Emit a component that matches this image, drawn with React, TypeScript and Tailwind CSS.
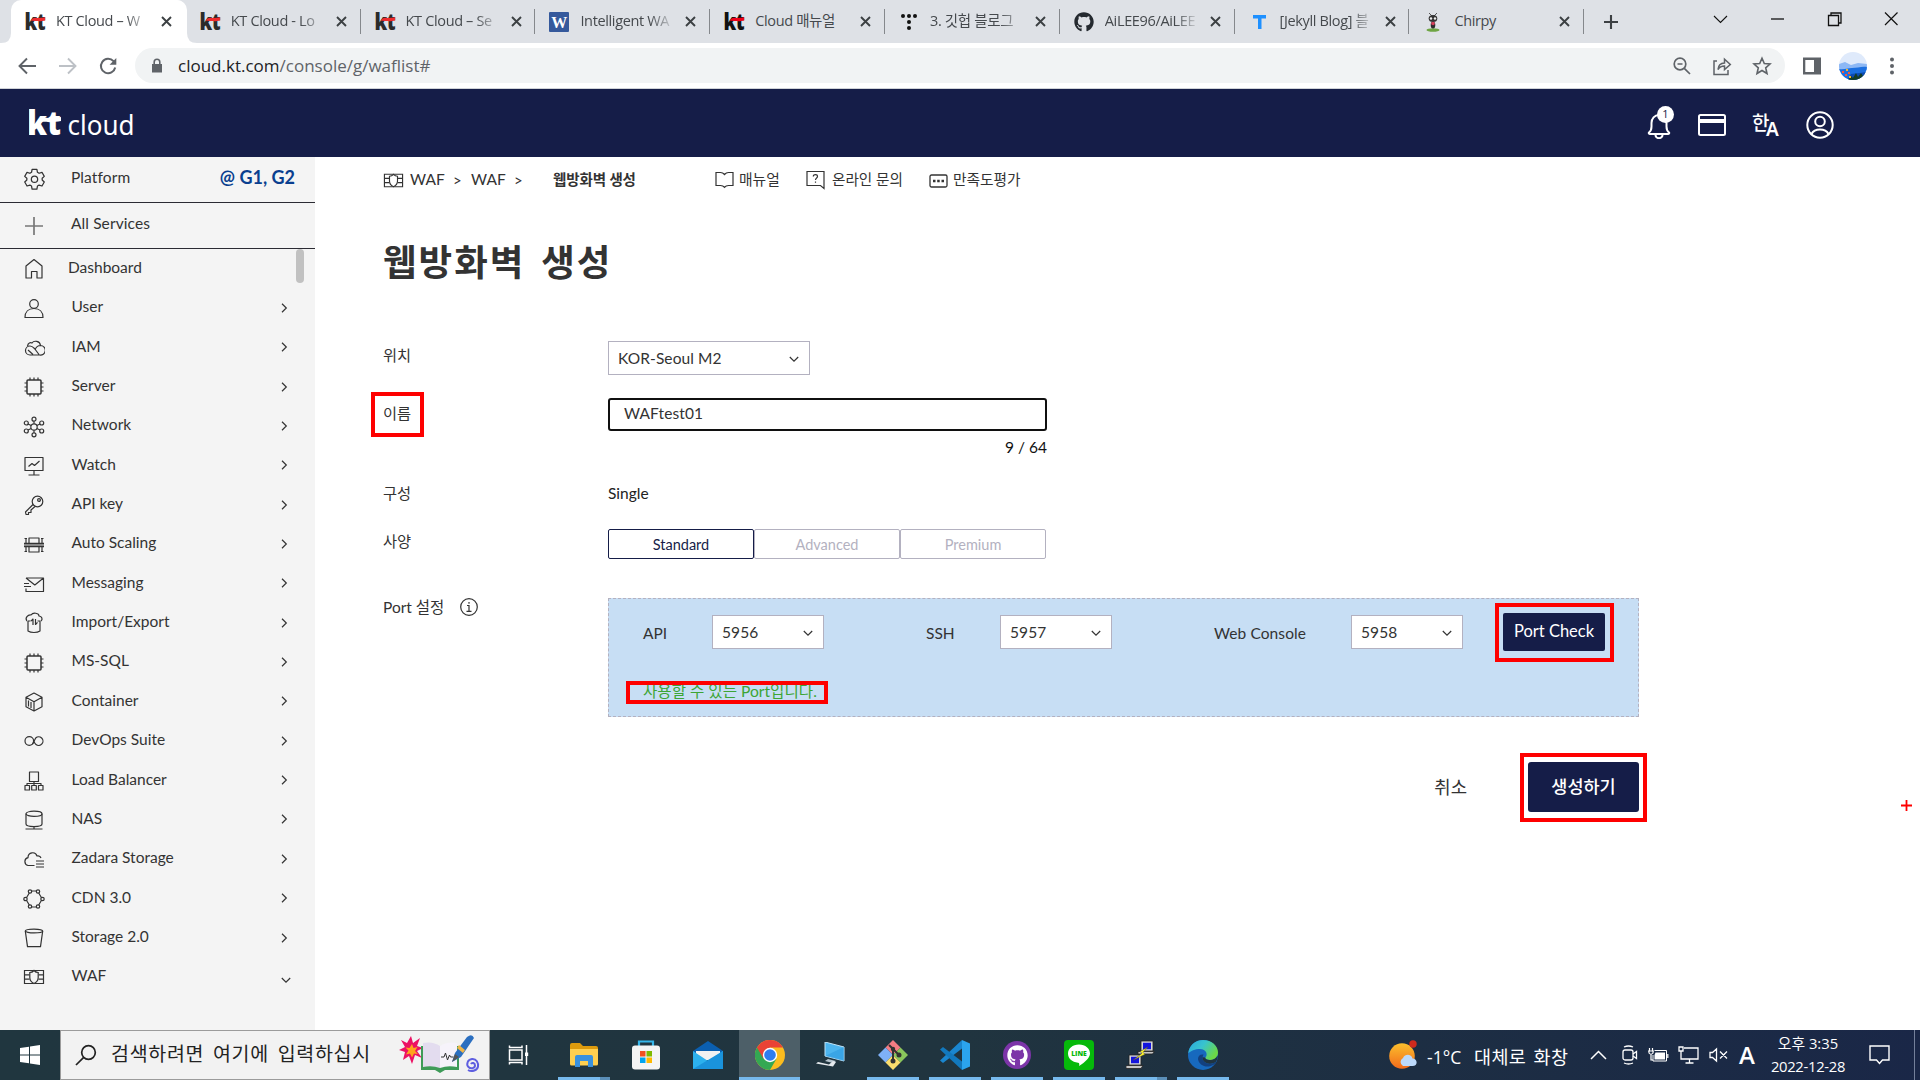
import React from "react";
import { FaGithub } from "react-icons/fa";

const UI = "font-['Open_Sans','Noto_Sans_CJK_KR',sans-serif]";

/* ---------- shared drawings ---------- */

function KtLogo({ size, ink, accent }: { size: number; ink: string; accent: string }) {
  return (
    <svg width={size} height={size} viewBox="0 0 20 20" className="shrink-0 overflow-visible">
      <text x="-0.6" y="17.6" fontSize="22" fontWeight="800" fill={ink} textLength="21" lengthAdjust="spacingAndGlyphs" fontFamily="Open Sans, sans-serif">kt</text>
      <path d="M5.8 8.8C8 5 10 5.6 12.5 5.9c3 .4 5-.1 7.700-.7v3.200c-3 .7-5 1-8 .7-2.400-.2-4-.6-6.400-.3Z" fill={accent} />
    </svg>
  );
}

function Chevron({ down = false, size = 10 }: { down?: boolean; size?: number }) {
  return (
    <svg width={size} height={size} viewBox="0 0 10 10" fill="none" stroke="#333" strokeWidth="1.200">
      {down ? <path d="M.8 3L5 7.200 9.200 3" /> : <path d="M3 .8L7.300 5 3 9.200" />}
    </svg>
  );
}

function WafGlyph({ w = 22, bg = "#f4f4f4" }: { w?: number; bg?: string }) {
  return (
    <svg width={w} height={w} viewBox="0 0 22 22" fill="none" stroke="#333" strokeWidth="1.200" className="shrink-0">
      <path d="M1.500 4.500h19v13h-19zM1.500 8.800h5M1.500 13.200h5M15.500 8.800h5M15.500 13.200h5" />
      <path d="M6.800 6.500c1.800 0 3-.6 4.200-2 1.200 1.400 2.400 2 4.200 2v5c0 2.800-1.700 4.800-4.200 6-2.500-1.200-4.200-3.200-4.200-6z" fill={bg} />
    </svg>
  );
}

/* ---------- browser ---------- */

const favicons: Record<string, React.ReactNode> = {
  kt: <KtLogo size={20} ink="#2b2b2b" accent="#ef2b2d" />,
  kt2: <KtLogo size={20} ink="#111" accent="#ef0018" />,
  w: (
    <svg width="20" height="20" viewBox="0 0 20 20">
      <rect width="20" height="20" rx="1" fill="#35599c" />
      <text x="10" y="15.500" textAnchor="middle" fontSize="16" fontWeight="700" fill="#fff" fontFamily="Liberation Serif, serif">W</text>
    </svg>
  ),
  dots: (
    <svg width="20" height="20" viewBox="0 0 20 20" fill="#111">
      <circle cx="4" cy="4" r="2" /><circle cx="10" cy="4" r="2" /><circle cx="16" cy="4" r="2" />
      <circle cx="10" cy="10" r="2" /><circle cx="10" cy="16" r="2" />
    </svg>
  ),
  gh: <FaGithub size={20} color="#24292f" />,
  t: (
    <svg width="20" height="20" viewBox="0 0 20 20">
      <path d="M4 3h13v3.500h-4.500V17H9V6.500H4z" fill="#1e90ff" />
    </svg>
  ),
  ant: (
    <svg width="20" height="20" viewBox="0 0 20 20">
      <path d="M6 1l3 3M14 1l-3 3" stroke="#555" strokeWidth="1" />
      <ellipse cx="10" cy="18" rx="6.500" ry="1.800" fill="#6fa544" />
      <ellipse cx="10" cy="6.500" rx="4.300" ry="3.500" fill="#333" />
      <circle cx="8" cy="6.500" r="1.200" fill="#eee" /><circle cx="12" cy="6.500" r="1.200" fill="#eee" />
      <ellipse cx="10" cy="13" rx="2.300" ry="3.500" fill="#2c2c2c" />
      <circle cx="10" cy="11.500" r="1.800" fill="#d8405c" />
    </svg>
  ),
};

const tabs = [
  ["kt", "KT Cloud – W"],
  ["kt", "KT Cloud - Lo"],
  ["kt", "KT Cloud – Se"],
  ["w", "Intelligent WA"],
  ["kt2", "Cloud 매뉴얼"],
  ["dots", "3. 깃헙 블로그"],
  ["gh", "AiLEE96/AiLEE"],
  ["t", "[Jekyll Blog] 블"],
  ["ant", "Chirpy"],
];

function TabStrip() {
  return (
    <div className={`flex h-[43px] bg-[#dee1e6] pl-[11px] text-[14.5px] tracking-[-0.35px] text-[#45494d] ${UI}`}>
      {tabs.map(([icon, title], i) => (
        <div key={i} className={`relative flex h-[43px] w-[174.800px] shrink-0 items-center pl-[14px] ${i === 0 ? "rounded-t-[10px] bg-white" : ""}`}>
          {i === 0 && (
            <svg width="196" height="10" viewBox="0 0 196 10" className="absolute bottom-0 left-[-10px]" fill="#fff">
              <path d="M0 10Q10 10 10 0V10zM196 10Q186 10 186 0V10zM184 0h2v10h-2z" />
            </svg>
          )}
          {i === 0 && <div className="absolute left-[165px] top-0 h-[43px] w-[11px] rounded-tr-[10px] bg-white" />}
          <div className="flex w-[20px] shrink-0 justify-center">{favicons[icon]}</div>
          <div className={`ml-[11px] w-[97px] shrink-0 overflow-hidden whitespace-nowrap pb-[1px] ${title === "Chirpy" || title === "Cloud 매뉴얼" ? "" : "[mask-image:linear-gradient(to_right,black_72%,transparent_98%)]"}`}>{title}</div>
          <svg width="11" height="11" viewBox="0 0 11 11" className="relative ml-[8px] shrink-0" stroke="#3c4043" strokeWidth="1.900">
            <path d="M1 1l9 9M10 1L1 10" />
          </svg>
          {i > 0 && <div className="absolute right-0 top-[9px] h-[25px] w-px bg-[#85888c]" />}
        </div>
      ))}
      <div className="flex w-[53px] items-center justify-center">
        <svg width="16" height="16" viewBox="0 0 16 16" stroke="#3c4043" strokeWidth="2.100"><path d="M8 1v14M1 8h14" /></svg>
      </div>
      <div className="ml-auto flex h-[37px] items-center text-black">
        <svg width="57" height="20" viewBox="0 0 57 20" fill="none" stroke="#111" strokeWidth="1.100"><path d="M22 7l6.500 6.500L35 7" /></svg>
        <svg width="57" height="20" viewBox="0 0 57 20" stroke="#111" strokeWidth="1.300"><path d="M22 10h13" /></svg>
        <svg width="57" height="20" viewBox="0 0 57 20" fill="none" stroke="#111" strokeWidth="1.300"><path d="M22.500 6.500h10v10h-10zM25 6.500V4h10v10h-2.500" /></svg>
        <svg width="57" height="20" viewBox="0 0 57 20" stroke="#111" strokeWidth="1.200"><path d="M22 3.500l12.500 12.500M34.500 3.500L22 16" /></svg>
      </div>
    </div>
  );
}

function Toolbar() {
  return (
    <div className={`flex h-[46px] items-center border-b border-[#d0d3d8] bg-white pl-[17px] ${UI}`}>
      <svg width="20" height="20" viewBox="0 0 20 20" fill="none" stroke="#5f6368" strokeWidth="1.900"><path d="M19 10H3M10 2.500L2.500 10l7.500 7.500" /></svg>
      <svg width="20" height="20" viewBox="0 0 20 20" fill="none" stroke="#bdc1c6" strokeWidth="1.900" className="ml-[21px]"><path d="M1 10h16M10 2.500l7.500 7.500-7.500 7.500" /></svg>
      <svg width="20" height="20" viewBox="0 0 20 20" fill="none" stroke="#5f6368" strokeWidth="2" className="ml-[20px]">
        <path d="M17.200 11.500a7.200 7.200 0 1 1-1.700-6.300L17 6.700" /><path d="M18.300 2v6.700h-6.700z" fill="#5f6368" stroke="none" />
      </svg>
      <div className="ml-[17px] flex h-[35px] w-[1650px] items-center rounded-full bg-[#f1f3f4] pl-[16px]">
        <svg width="12" height="15" viewBox="0 0 12 15"><path d="M1 6h10v8.500H1z" fill="#5f6368" /><path d="M3.200 6V4a2.800 2.800 0 0 1 5.600 0v2" fill="none" stroke="#5f6368" strokeWidth="1.600" /></svg>
        <span className="ml-[15px] whitespace-nowrap text-[17px] text-[#202124]">cloud.kt.com<span className="text-[#5f6368]">/console/g/waflist#</span></span>
        <svg width="20" height="20" viewBox="0 0 20 20" fill="none" stroke="#5f6368" strokeWidth="1.700" className="ml-auto"><circle cx="8" cy="8" r="5.800" /><path d="M12.300 12.300l5.700 5.700M5.500 8h5" /></svg>
        <svg width="20" height="20" viewBox="0 0 20 20" fill="none" stroke="#5f6368" strokeWidth="1.500" className="ml-[20px]"><path d="M5 5H2v13.500h14V14M6 13.500c.3-4.500 3-6.300 6.500-6.500V3.300L18.300 8.500l-5.800 5v-3.400c-3 0-5 1-6.500 3.400z" /></svg>
        <svg width="20" height="20" viewBox="0 0 20 20" fill="none" stroke="#5f6368" strokeWidth="1.600" className="ml-[20px] mr-[13px]"><path d="M10 2.200l2.300 5.300 5.700.5-4.300 3.800 1.300 5.700-5-3-5 3 1.300-5.700L2 8l5.700-.5z" /></svg>
      </div>
      <svg width="18" height="18" viewBox="0 0 18 18" className="ml-[18px]"><path d="M0 .5h18v17H0z" fill="#5f6368" /><path d="M2.300 3h8.700v12H2.300z" fill="#fff" /></svg>
      <svg width="28" height="28" viewBox="0 0 28 28" className="ml-[18px]">
        <clipPath id="av"><circle cx="14" cy="14" r="14" /></clipPath>
        <g clipPath="url(#av)">
          <path d="M0 0h28v28H0z" fill="#dfeafb" /><path d="M0 12l6-2 6 3 7-2 9 1v6H0z" fill="#8db8f5" />
          <path d="M0 17c5 1 8-1 13-1s10-2 15-1v15H0z" fill="#1b6fe0" /><path d="M12 22l16-2v8H8z" fill="#0c4bb3" />
          <path d="M9 28l3-4 2 2 3-5 2 4 3-4 2 3 4-5v9z" fill="#143d25" />
          <path d="M3 19h2v2H3zM6 22h2v2H6zM9 20h2v2H9z" fill="#f2583e" /><path d="M7 17h2v2H7zM10 24h2v2h-2z" fill="#f5b52e" />
        </g>
      </svg>
      <svg width="6" height="18" viewBox="0 0 6 18" fill="#5f6368" className="ml-[22px]"><circle cx="3" cy="2.500" r="2" /><circle cx="3" cy="9" r="2" /><circle cx="3" cy="15.500" r="2" /></svg>
    </div>
  );
}

/* ---------- console header ---------- */

function ConsoleHeader() {
  return (
    <header className="flex h-[68px] items-center bg-[#151d48] pl-[29px] pr-[86px] pt-[4px]">
      <svg width="106" height="34" viewBox="0 0 106 34" fill="#fff" className="mt-[-1px]">
        <text x="-2" y="27" fontSize="33" fontWeight="800" textLength="34" lengthAdjust="spacingAndGlyphs" fontFamily="Open Sans, sans-serif">kt</text>
        <path d="M9 15c3-5 6-5.500 10-5 5 .5 8 0 13-1v4c-5 1-9 1.500-13 1-4-.5-7 0-10 1z" />
        <text x="38.500" y="27" fontSize="27" textLength="67" lengthAdjust="spacingAndGlyphs" fontFamily="Noto Sans, sans-serif">cloud</text>
      </svg>
      <div className="ml-auto flex items-center">
        <div className="relative h-[28px] w-[26px]">
          <svg width="24" height="28" viewBox="0 0 24 28" fill="none" stroke="#fff" strokeWidth="2"><path d="M2 21.500c2-1.500 2.500-3 2.500-6V12c0-4.500 3-8 7.500-8s7.500 3.500 7.500 8v3.500c0 3 .5 4.500 2.500 6 .5.500 0 1.500-1 1.500H3c-1 0-1.500-1-1-1.500zM8.500 24a3.500 3.200 0 0 0 7 0" /></svg>
          <div className={`absolute left-[10px] top-[-5px] flex h-[17px] w-[17px] items-center justify-center rounded-full bg-white text-[11px] text-[#151d48] ${UI}`}>1</div>
        </div>
        <svg width="28" height="22" viewBox="0 0 28 22" fill="none" stroke="#fff" strokeWidth="2" className="ml-[25px]"><rect x="1" y="1" width="26" height="20" rx="1.500" /><path d="M1 7h26" strokeWidth="4" /></svg>
        <div className="relative ml-[27px] h-[28px] w-[27px] text-white">
          <span className="absolute left-[-1px] top-[1px] font-['Noto_Sans_CJK_KR',sans-serif] text-[19px] font-medium leading-none">한</span>
          <span className="absolute left-[13px] top-[9px] font-['Noto_Sans',sans-serif] text-[19px] font-semibold leading-none [text-shadow:-2px_0_#151d48]">A</span>
        </div>
        <svg width="28" height="28" viewBox="0 0 28 28" fill="none" stroke="#fff" strokeWidth="2" className="ml-[26px]"><circle cx="14" cy="14" r="12.700" /><circle cx="14" cy="10.500" r="4.800" /><path d="M5.500 23c1.500-3 4.500-4.500 8.500-4.500s7 1.500 8.500 4.500" /></svg>
      </div>
    </header>
  );
}

/* ---------- sidebar ---------- */

function Glyph({ children }: { children: React.ReactNode }) {
  return (
    <svg width="22" height="22" viewBox="0 0 22 22" fill="none" stroke="#333" strokeWidth="1.200" strokeLinejoin="round" className="shrink-0">
      {children}
    </svg>
  );
}

const chip = (
  <Glyph><rect x="4" y="4" width="14" height="14" rx="1" strokeWidth="1.500" /><path d="M7 4V1.500M11 4V1.500M15 4V1.500M7 20.500V18M11 20.500V18M15 20.500V18M1.500 7H4M1.500 11H4M1.500 15H4M18 7h2.500M18 11h2.500M18 15h2.500" /></Glyph>
);

const menu: [string, React.ReactNode][] = [
  ["Dashboard", <Glyph><path d="M3 20V8l8-6.500L19 8v12h-5v-6.500H8.500V20z" /></Glyph>],
  ["User", <Glyph><circle cx="11" cy="6" r="4.300" /><path d="M2 19.500c0-5.500 3.500-9 9-9s9 3.500 9 9z" /></Glyph>],
  ["IAM", <Glyph><path d="M7 18a4.500 4.500 0 1 1 0-9c2 0 3 1 4.500 2.500L16 17.500M4.500 9C5 6 7.500 5 9 6c2-3 8-2 8.500 2.500a4.800 4.800 0 1 1-1 9.500H6M12 13c1-3 3-4.500 5.500-4.500M5 13l5 4.500" /></Glyph>],
  ["Server", chip],
  ["Network", <Glyph><circle cx="11" cy="11" r="3.200" /><circle cx="11" cy="3.200" r="2" /><circle cx="11" cy="18.800" r="2" /><circle cx="3.300" cy="7" r="2" /><circle cx="3.300" cy="15" r="2" /><circle cx="18.700" cy="7" r="2" /><circle cx="18.700" cy="15" r="2" /><path d="M11 5.200v2.600M11 14.200v2.600M5 8l3.200 1.500M5 14l3.200-1.500M17 8l-3.200 1.500M17 14l-3.200-1.500" /></Glyph>],
  ["Watch", <Glyph><path d="M2 2.500h18v13H2zM11 15.500V20M5.500 20h11M5.500 11.500l3.500-3 2.500 2 5-4.500" /></Glyph>],
  ["API key", <Glyph><circle cx="14.500" cy="7.500" r="5.300" /><circle cx="16" cy="6" r="1.400" /><path d="M10 10.500L2.500 18l.5 2.500h2.500V18.500H8V16l4-3.500" /></Glyph>],
  ["Auto Scaling", <Glyph><path d="M6 4h10v14H6zM3 4v14M19 4v14" /><path d="M1 11h20" strokeWidth="4" stroke="#888" /><path d="M1 9.300h20M1 12.700h20M1.500 4.500H4M18 4.500h2.500M1.500 17.500H4M18 17.500h2.500" /></Glyph>],
  ["Messaging", <Glyph><path d="M3 5h17.500v13.500H3V15.500M3 5l8.800 7L20.500 5M1 10.500h5M1 13.500h7" /></Glyph>],
  ["Import/Export", <Glyph><path d="M4 9C1.500 6 5 2.500 8 3c2-3 8-2 8 1 3 .5 4 3 2 5" /><path d="M5 9h2.500M14.500 9H17V19c-3 2-9 2-12 0V9M10 13V7L8 9.200M12.500 7v5.500l2-2.200" /></Glyph>],
  ["MS-SQL", chip],
  ["Container", <Glyph><path d="M11 2l8 4.300v9.400L11 20l-8-4.300V6.300zM3 6.300l8 4.500 8-4.500M11 10.800V20M5.500 9.500v6M8 11v6" /></Glyph>],
  ["DevOps Suite", <Glyph><circle cx="6.300" cy="11" r="4.300" /><path d="M9.500 14.200L12.700 8a4.300 4.300 0 1 1 .3 6.500C11.500 13.300 11.300 12 11 11" /></Glyph>],
  ["Load Balancer", <Glyph><path d="M6.500 2h9v9.500h-9zM11 11.500V15M4 15v-1.500h14V15M2 15.500h4.500V20H2zM8.700 15.500h4.600V20H8.700zM15.500 15.500H20V20h-4.500z" /></Glyph>],
  ["NAS", <Glyph><ellipse cx="11" cy="4.800" rx="8" ry="2.600" /><path d="M3 4.800V15c0 3.400 16 3.400 16 0V4.800M11 17.600V20M2.500 20h17" /></Glyph>],
  ["Zadara Storage", <Glyph><path d="M11.500 17.500H5A4 4 0 0 1 5 9.700C5 4 12.500 3 14 8c2-.5 3.500.5 4 2M13 13h8M13 16h8M13 19h8" /></Glyph>],
  ["CDN 3.0", <Glyph><path d="M7.500 3h7l4.800 8-4.800 8h-7L2.700 11z" /><g fill="#f4f4f4"><circle cx="7" cy="3.500" r="1.700" /><circle cx="15" cy="3.500" r="1.700" /><circle cx="19.500" cy="11" r="1.700" /><circle cx="2.500" cy="11" r="1.700" /><circle cx="7" cy="18.500" r="1.700" /><circle cx="15" cy="18.500" r="1.700" /></g></Glyph>],
  ["Storage 2.0", <Glyph><ellipse cx="11" cy="4" rx="8.700" ry="1.900" /><path d="M2.300 4l2.200 15.700h13L19.700 4" /></Glyph>],
  ["WAF", <WafGlyph />],
];

function Sidebar() {
  return (
    <aside className="relative w-[315px] shrink-0 bg-[#f4f4f4] font-['Lato',sans-serif] text-[15.500px] text-[#333]">
      <div className="flex h-[46px] items-center border-b border-[#2b2b33] pl-[23px] pr-[20px]">
        <svg width="23" height="23" viewBox="0 0 24 24" fill="none" stroke="#333" strokeWidth="1.300">
          <path d="M9.500 1.500h5l.6 3 1.700 1 3-1 2.400 4.200-2.200 2v1.900l2.200 2-2.400 4.200-3-1-1.700 1-.6 3.200h-5l-.6-3.200-1.700-1-3 1-2.400-4.200 2.200-2v-1.900l-2.200-2 2.400-4.200 3 1 1.700-1z" strokeLinejoin="round" /><circle cx="12" cy="11.800" r="3.300" />
        </svg>
        <span className="ml-[25px] pb-[4px] tracking-[0.100px]">Platform</span>
        <span className="ml-auto pb-[4px] text-[18px] font-bold text-[#0a3f8f]">@ G1, G2</span>
      </div>
      <div className="flex h-[46px] items-center border-b border-[#2b2b33] pl-[25px]">
        <svg width="18" height="18" viewBox="0 0 18 18" stroke="#777" strokeWidth="1.700"><path d="M9 0v18M0 9h18" /></svg>
        <span className="ml-[28px] pb-[4px] tracking-[0.100px]">All Services</span>
      </div>
      {menu.map(([label, icon], i) => (
        <div key={label} className="flex h-[39.350px] items-center pl-[23px]">
          <div className="mt-[1px]">{icon}</div>
          <span className={i === 0 ? "ml-[23px] pb-[3px]" : "ml-[26.500px] pb-[2px]"}>{label}</span>
          {i > 0 && i < menu.length - 1 && <span className="ml-auto mr-[26px]"><Chevron size={10} /></span>}
          {i === menu.length - 1 && <span className="ml-auto mr-[24px] mt-[6px]"><Chevron down size={10} /></span>}
        </div>
      ))}
      <div className="absolute right-[11px] top-[92px] h-[34px] w-[8px] rounded-full bg-[#c1c1c1]" />
    </aside>
  );
}

/* ---------- form ---------- */

function Select({ value, className }: { value: string; className: string }) {
  return (
    <div className={`flex h-[34px] items-center border border-[#b3b1c0] bg-white pl-[9px] text-[15.500px] text-[#333] ${className}`}>
      <span className="pt-[1px] tracking-[0.100px]">{value}</span>
      <span className="ml-auto mr-[10px] mt-[1px]"><Chevron down size={10} /></span>
    </div>
  );
}

/* Red marker drawn on top of the page around a highlighted element. */
function Mark({ className }: { className: string }) {
  return <div className={`pointer-events-none absolute border-4 border-[#fe0000] ${className}`} />;
}

function Label({ children }: { children: React.ReactNode }) {
  return <div className="flex w-[225px] shrink-0 items-center text-[#333]">{children}</div>;
}

function Main() {
  return (
    <main className="relative flex-1 pl-[68px] font-['Lato','Noto_Sans_CJK_KR',sans-serif] text-[15.500px] text-[#333]">
      <div className="flex h-[46px] items-center whitespace-nowrap text-[15px]">
        <WafGlyph w={21} bg="#fff" />
        <span className="ml-[6px] w-[43px] text-[15.500px]">WAF</span>
        <span className="w-[18px] text-[15px]">&gt;</span>
        <span className="w-[43px] text-[15.500px]">WAF</span>
        <span className="w-[39px] text-[15px]">&gt;</span>
        <span className="w-[162px] text-[14.500px] font-bold tracking-[-0.100px]">웹방화벽 생성</span>
        <svg width="19" height="18" viewBox="0 0 19 18" fill="none" stroke="#333" strokeWidth="1.200"><path d="M1 1.500h4.500c2 0 3 .8 4 2 1-1.200 2-2 4-2H18v13h-4.500c-2 0-3 .5-4 1.800-1-1.300-2-1.800-4-1.800H1z" /></svg>
        <span className="ml-[5px] w-[67px] pb-[1px] text-[14.800px]">매뉴얼</span>
        <svg width="19" height="20" viewBox="0 0 19 20" fill="none" stroke="#333" strokeWidth="1.200"><path d="M1 1.500h17v17l-3.500-3H1zM7.300 6.500c0-2.500 4.200-2.500 4.200 0 0 1.500-2 1.500-2 3.500M9.500 11.500v1.300" /></svg>
        <span className="ml-[7px] w-[97px] pb-[1px] text-[14.600px]">온라인 문의</span>
        <svg width="19" height="14" viewBox="0 0 19 14" fill="none" stroke="#333" strokeWidth="1.300" className="mt-[2px]"><rect x="1" y="1" width="17" height="12" rx="1.500" /><path d="M4 7h2.500M8.200 7h2.500M12.500 7H15" strokeWidth="2.400" /></svg>
        <span className="ml-[5px] pb-[1px] text-[14.700px]">만족도평가</span>
      </div>

      <h1 className="mt-[32px] h-[54px] whitespace-nowrap text-[36.500px] font-bold leading-[54px] tracking-[2px] [word-spacing:5px]">웹방화벽 생성</h1>

      <div className="mt-[52px] flex h-[34px]">
        <Label><span className="pb-[5px] text-[15.300px]">위치</span></Label>
        <Select value="KOR-Seoul M2" className="w-[202px]" />
      </div>

      <div className="mt-[23px] flex h-[33px]">
        <Label><span className="pb-[2px] text-[15.300px]">이름</span></Label>
        <div className="flex w-[439px] items-center rounded-[3px] border-2 border-[#101010] pb-[2px] pl-[14px] tracking-[0.100px]">WAFtest01</div>
      </div>
      <div className="mt-[5px] h-[22px] w-[664px] text-right leading-[22px] text-[#111]">9 / 64</div>

      <div className="mt-[24px] flex h-[24px] items-center">
        <Label><span className="pb-[2px] text-[15.300px]">구성</span></Label>
        <span className="text-[#222]">Single</span>
      </div>

      <div className="mt-[23px] flex h-[30px]">
        <Label><span className="pb-[5px] text-[15.300px]">사양</span></Label>
        <div className="flex text-[14.500px] text-[#b3b1c0]">
          <div className="flex w-[146px] items-center justify-center rounded-[2px] border border-[#151d48] pt-[2px] text-[#151d48]">Standard</div>
          <div className="flex w-[146px] items-center justify-center rounded-[2px] border border-[#b3b1c0] pt-[2px]">Advanced</div>
          <div className="flex w-[146px] items-center justify-center rounded-[2px] border border-[#b3b1c0] pt-[2px]">Premium</div>
        </div>
      </div>

      <div className="mt-[39px] flex h-[119px]">
        <div className="flex h-[20px] w-[225px] shrink-0 items-center">
          <span className="w-[77px] text-[15.500px]">Port 설정</span>
          <svg width="18" height="18" viewBox="0 0 18 18" fill="none" stroke="#333" strokeWidth="1.200" className="mt-[-2px]"><circle cx="9" cy="9" r="8.300" /><path d="M7 7.500h2V13M6.500 13.300h5M9 4v1.800" /></svg>
        </div>
        <div className="w-[1031px] border border-dashed border-[#b3b1c0] bg-[#c7def4] pl-[34px]">
          <div className="relative mt-[14px] flex h-[38px] items-center whitespace-nowrap">
            <span className="w-[69px] pt-[3px]">API</span>
            <Select value="5956" className="w-[112px]" />
            <span className="ml-[102px] w-[74px] pt-[3px]">SSH</span>
            <Select value="5957" className="w-[112px]" />
            <span className="ml-[102px] w-[137px] pt-[3px] tracking-[0.100px]">Web Console</span>
            <Select value="5958" className="w-[112px]" />
            <div className="ml-[40px] flex h-[38px] w-[102px] items-center justify-center rounded-[2px] bg-[#151d48] pb-[1px] text-[16.500px] text-white">Port Check</div>
            <Mark className="left-[852px] top-[-10px] h-[59px] w-[119px]" />
          </div>
          <div className="relative mt-[28px] h-[24px] w-[180px] whitespace-nowrap text-[15.600px] leading-[24px] text-[#3da535]">
            사용할 수 있는 Port입니다.
            <Mark className="left-[-17px] top-[2px] h-[23px] w-[202px]" />
          </div>
        </div>
      </div>

      <div className="relative mt-[45px] flex h-[50px] w-[1256px] items-center justify-end text-[17px]">
        <span className="mr-[61px] pt-[1px] text-[17.800px]">취소</span>
        <div className="flex h-[50px] w-[111px] items-center justify-center rounded-[3px] bg-[#151d48] pt-[1px] text-[17.500px] font-medium text-white">생성하기</div>
        <Mark className="right-[-8px] top-[-9px] h-[69px] w-[127px]" />
      </div>

      <Mark className="left-[56px] top-[235px] h-[45px] w-[53px]" />
      <svg width="11" height="11" viewBox="0 0 11 11" stroke="#fe0000" strokeWidth="1.800" className="absolute right-[8px] top-[643px]"><path d="M5.500 0v11M0 5.500h11" /></svg>
    </main>
  );
}

/* ---------- taskbar ---------- */

const apps: { icon: React.ReactNode; w: string; bar?: boolean; active?: boolean; multi?: boolean }[] = [
  {
    w: "w-[63px]",
    icon: <svg width="22" height="22" viewBox="0 0 22 22" fill="none" stroke="#fff" strokeWidth="1.500"><path d="M1.500 6h12.500v10H1.500zM1.500 1.500v2h12.500v-2M1.500 20.500v-2h12.500v2M18.500 1v20" /><path d="M17 8.500h3.200v3.500H17z" fill="#fff" stroke="none" /></svg>,
  },
  {
    w: "w-[62px]", bar: true, multi: true,
    icon: <svg width="30" height="26" viewBox="0 0 30 26"><path d="M1 3q0-2 2-2h8l3 3h13q2 0 2 2v14H1z" fill="#dc9a0d" /><path d="M1 7h28v15q0 1.500-1.500 1.500h-25Q1 23.500 1 22z" fill="#ffcf4f" /><path d="M6 25V15q0-2 2-2h14q2 0 2 2v10h-5v-6h-8v6z" fill="#3a91dd" /></svg>,
  },
  {
    w: "w-[62px]",
    icon: <svg width="30" height="30" viewBox="0 0 30 30"><path d="M8 7V1.500h14V7" fill="none" stroke="#35b6ea" strokeWidth="2.200" /><rect x="1" y="5.500" width="28" height="24" rx="3" fill="#f4f4f4" /><path d="M9 11h5.500v5.500H9z" fill="#f25022" /><path d="M15.500 11H21v5.500h-5.500z" fill="#7fba00" /><path d="M9 17.500h5.500V23H9z" fill="#00a4ef" /><path d="M15.500 17.500H21V23h-5.500z" fill="#ffb900" /></svg>,
  },
  {
    w: "w-[62px]",
    icon: <svg width="30" height="28" viewBox="0 0 30 28"><path d="M0 10L15 0l15 10v8H0z" fill="#0b5fb0" /><path d="M3 10h24v9H3z" fill="#f1f1f1" /><path d="M0 10l15 10L30 10v18H0z" fill="#2cb1ee" /><path d="M0 28l30-18v18z" fill="#1a93dc" /></svg>,
  },
  {
    w: "w-[61px]", bar: true, active: true,
    icon: <svg width="30" height="30" viewBox="0 0 30 30"><circle cx="15" cy="15" r="15" fill="#fbbc1f" /><path d="M2 7.500A15 15 0 0 0 15 30l6.500-11.200L15 15z" fill="#34a853" /><path d="M2 7.500A15 15 0 0 1 28 7.500H15L8.500 18.800z" fill="#ea4335" /><circle cx="15" cy="15" r="7.200" fill="#fff" /><circle cx="15" cy="15" r="5.800" fill="#2f7df0" /></svg>,
  },
  {
    w: "w-[62px]",
    icon: <svg width="30" height="26" viewBox="0 0 30 26"><path d="M9 0l19 5v14L9 14z" fill="#4db5ef" stroke="#bfe3f7" strokeWidth="1" /><path d="M12 17l8 2-3 2-8-2z" fill="#b9c7d1" /><path d="M2 20l11 2.500L17 19l3 1-3 4.500L0 21.500z" fill="#e6eaee" /><path d="M9 14l19-9v14z" fill="#2896de" opacity=".5" /></svg>,
  },
  {
    w: "w-[62px]", bar: true,
    icon: <svg width="30" height="30" viewBox="0 0 30 30"><path d="M15 0l7.500 7.500L15 15 7.500 7.500z" fill="#f47c84" /><path d="M7.500 7.500L15 15l-7.500 7.500L0 15z" fill="#7eb0f8" /><path d="M22.500 7.500L30 15l-7.500 7.500L15 15z" fill="#8ac65c" /><path d="M15 15l7.500 7.500L15 30l-7.500-7.500z" fill="#fbdd6d" /><path d="M11 5l4 4v12M15 9l6 6" stroke="#333" strokeWidth="2" fill="none" /><circle cx="15" cy="9" r="2.200" fill="#333" /><circle cx="15" cy="21" r="2.500" fill="#333" /><circle cx="21" cy="15" r="2.500" fill="#333" /></svg>,
  },
  {
    w: "w-[62px]", bar: true,
    icon: <svg width="30" height="30" viewBox="0 0 30 30"><path d="M22 0l8 3.500v23L22 30z" fill="#2ba4ee" /><path d="M22 0v8.500L3 23 0 20.500z" fill="#1a86cf" /><path d="M22 30v-8.500L3 7 0 9.500z" fill="#1278bd" /></svg>,
  },
  {
    w: "w-[62px]", bar: true,
    icon: <div className="flex h-[28px] w-[28px] items-center justify-center rounded-full bg-[#7c35a8]"><FaGithub size={21} color="#fff" /></div>,
  },
  {
    w: "w-[62px]", bar: true,
    icon: <svg width="30" height="30" viewBox="0 0 30 30"><rect width="30" height="30" rx="4" fill="#06b90a" /><path d="M15 4.500c6.500 0 11 4 11 9 0 4-4.500 8.500-11 12.500.5-2 .5-3-1-3.300C8 22 4 18.500 4 13.500c0-5 4.500-9 11-9z" fill="#fff" /><text x="15" y="16" textAnchor="middle" fontSize="6.800" fontWeight="800" fill="#06b90a" fontFamily="Open Sans, sans-serif">LINE</text></svg>,
  },
  {
    w: "w-[62px]", bar: true, multi: true,
    icon: <svg width="30" height="30" viewBox="0 0 30 30"><g stroke="#222" strokeWidth=".8"><path d="M15 1h12v10H15zM3 15h12v10H3z" fill="#d6d6d6" /><path d="M12 11.500h16.500l-2 2.500H12zM0 25.500h17l-2 3H0z" fill="#c6c6c6" /></g><path d="M17 2.700h8v6.500h-8zM5 16.800h8v6.500H5z" fill="#1414dd" /><path d="M22 7l-8 4.500 2 1.800-9 7 12-6-2-2z" fill="#fdf32b" stroke="#444" strokeWidth=".5" /></svg>,
  },
  {
    w: "w-[62px]", bar: true,
    icon: (
      <svg width="30" height="30" viewBox="0 0 30 30">
        <defs><linearGradient id="eg" x1="0" y1="0" x2="1" y2=".5"><stop offset="0" stopColor="#2aa6dd" /><stop offset=".5" stopColor="#38c3cf" /><stop offset="1" stopColor="#6bd846" /></linearGradient></defs>
        <circle cx="15" cy="15" r="15" fill="#1769be" />
        <path d="M.3 13.500C1 5.500 7 0 15 0c9 0 15 6 15 12.500 0 5-4 7.500-8 7.500-3 0-5-1.200-4.700-2.400 3-2.600 1-8.600-5.300-8.600-5 0-9.500 1.800-11.700 4.500z" fill="url(#eg)" />
        <path d="M10 19c.5 5 6 8.500 12 7.300 3-.8 5-2.300 6-3.300.5-.8-.2-1-1-.6C19 26 12 21 15.500 14.500 12 14 10 16 10 19z" fill="#13407f" />
        <path d="M27.500 22.300c-5 2.700-13 1.700-13-5l2.800.3C17 19 19 20 22 20c3.500 0 6.500-2 7.500-4.500.5 2.500-.5 5-2 6.800z" fill="#203440" />
      </svg>
    ),
  },
];

function Taskbar() {
  return (
    <footer className={`flex h-[50px] bg-linear-to-r from-[#20363f] via-[#20343f] to-[#1a2747] text-white ${UI}`}>
      <div className="flex w-[60px] items-center justify-center">
        <svg width="20" height="20" viewBox="0 0 20 20" fill="#fff"><path d="M0 3l9-1.300V9.500H0zM10 1.500L20 0v9.500H10zM0 10.500h9v7.800L0 17zM10 10.500h10V20l-10-1.500z" /></svg>
      </div>
      <div className="flex w-[430px] shrink-0 items-center border border-[#9b9b9b] bg-[#f2f2f2] pl-[14px] text-[#222]">
        <svg width="22" height="22" viewBox="0 0 22 22" fill="none" stroke="#222" strokeWidth="1.700" className="shrink-0"><circle cx="13.500" cy="8.500" r="6.800" /><path d="M8.700 13.300L1 21" /></svg>
        <span className="ml-[14px] w-[270px] whitespace-nowrap pb-[2px] text-[19.500px] tracking-[0.700px] [word-spacing:3px]">검색하려면 여기에 입력하십시</span>
        <svg width="82" height="38" viewBox="0 0 82 38" className="ml-[18px] mt-[-3px] shrink-0">
          <path d="M12 1l2 7 7-5-3 8 6 2-6 3 5 7-7-3-3 9-3-8-6 4 2-8-6-2 6-3-4-7 6 3z" fill="#ec1163" />
          <path d="M13 9l1.500 4 4-1-2.500 4 3 3-4-.500-2 4-2-4-4 1 2.500-4-3-3 4 .5z" fill="#ffa41c" />
          <path d="M22 11h38v24H46l-5 3-5-3H22z" fill="#3e9b58" /><path d="M24 8q10-2 17 3v22q-8-3-17-1z" fill="#e3dcef" /><path d="M58 8q-10-2-17 3v22q8-3 17-1z" fill="#f6f3fa" />
          <path d="M42 22h3l1.500-4 2 7 2-5 1 2h3" fill="none" stroke="#333" strokeWidth="1" />
          <path d="M53 27l3-9L68 2q5-4 7 1L62 22z" fill="#2b6fc0" /><path d="M60 10l6 5-2 3-6-5z" fill="#f0b64a" /><path d="M53 27l3-8 4 3z" fill="#555" />
          <path d="M72 29c1-2 4-1 4 1.500s-4 4-6.500 1.500-1-7.500 3.500-8 6.500 4 6 7.500-6 6-10 3.500" fill="none" stroke="#5f5fe0" strokeWidth="2" />
        </svg>
      </div>
      <div className="flex">
        {apps.map((a, i) => (
          <div key={i} className={`relative flex items-center justify-center ${a.w} ${a.active ? "bg-[#4d5f68]" : ""} ${i === 0 ? "pr-[5px]" : ""}`}>
            {a.icon}
            {a.bar && <div className={`absolute bottom-0 h-[3px] bg-[#76b9ed] ${a.active ? "inset-x-0" : "inset-x-[5px]"}`} />}
            {a.multi && <div className="absolute bottom-0 right-[5px] h-[3px] w-[10px] bg-[#5b8fb8]" />}
          </div>
        ))}
      </div>
      <div className="ml-auto flex items-center whitespace-nowrap">
        <svg width="28" height="30" viewBox="0 0 28 30">
          <defs><linearGradient id="sun" x1="0" y1="0" x2="0" y2="1"><stop offset="0" stopColor="#fbc02d" /><stop offset="1" stopColor="#f26a1b" /></linearGradient></defs>
          <circle cx="13" cy="16" r="12.800" fill="url(#sun)" /><circle cx="24" cy="4" r="3.700" fill="#cf2a1d" /><path d="M14 26a4.500 4.500 0 0 1 0-8c2-4.500 8.500-4 9.500.5 5 0 6 7.500 0 7.500z" fill="#bcd9fb" />
        </svg>
        <span className="ml-[10px] w-[47px] pt-[4px] text-[17.500px]">-1°C</span>
        <span className="w-[116px] pt-[3px] text-[18.500px] tracking-[0.400px] [word-spacing:2px]">대체로 화창</span>
        <svg width="17" height="10" viewBox="0 0 17 10" fill="none" stroke="#fff" strokeWidth="1.500"><path d="M1 9l7.500-7.500L16 9" /></svg>
        <svg width="16" height="20" viewBox="0 0 16 20" fill="none" stroke="#fff" strokeWidth="1.300" className="ml-[15px]"><rect x="1" y="5" width="10" height="10" rx="2" /><path d="M11 9l3.500-2.500v7L11 11M2 2q4.500-2 9 0M2 18q4.500 2 9 0" /></svg>
        <svg width="21" height="16" viewBox="0 0 21 16" className="ml-[10px]"><path d="M6.500 3.500H18.500V14H5V8" fill="none" stroke="#fff" /><path d="M7.500 5.500h9.500V12.500H6.500V8z" fill="#fff" /><path d="M19.800 7v4M0 4h6M1.500 1v3M4.500 1v3M1 4v2q2 2.500 4 0V4M3 7v6h2" stroke="#fff" fill="none" strokeWidth="1.200" /></svg>
        <svg width="21" height="18" viewBox="0 0 21 18" fill="none" stroke="#fff" strokeWidth="1.300" className="ml-[9px]"><path d="M6 2h14v11H3V8M11.500 13v4M7.500 17h8M1 1h4v4H1zM3 5v4" /></svg>
        <svg width="19" height="16" viewBox="0 0 19 16" fill="none" stroke="#fff" strokeWidth="1.300" className="ml-[10px]"><path d="M1 5.500h2.500L7.500 2v12l-4-3.500H1zM11 4.500l7 7M18 4.500l-7 7" /></svg>
        <span className="ml-[11px] w-[17px] text-[24px] font-semibold">A</span>
        <div className="ml-[12px] flex w-[80px] flex-col items-center pb-[1px] text-[14.800px] leading-[23px]">
          <span>오후 3:35</span>
          <span className="tracking-[-0.300px]">2022-12-28</span>
        </div>
        <svg width="21" height="20" viewBox="0 0 21 20" fill="none" stroke="#fff" strokeWidth="1.400" className="ml-[21px]"><path d="M1 1h19v14h-6.500l-3 3.500-3-3.500H1z" /></svg>
        <div className="ml-[24px] h-[50px] w-px bg-[#74809a]" />
        <div className="w-[5px]" />
      </div>
    </footer>
  );
}

export default function App() {
  return (
    <div className="flex h-[1080px] w-[1920px] flex-col overflow-hidden bg-white">
      <TabStrip />
      <Toolbar />
      <ConsoleHeader />
      <div className="flex h-[873px]">
        <Sidebar />
        <Main />
      </div>
      <Taskbar />
    </div>
  );
}
